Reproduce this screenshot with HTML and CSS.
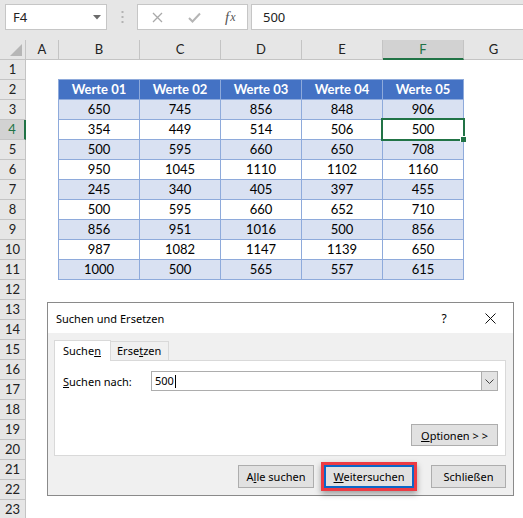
FILE: index.html
```html
<!DOCTYPE html>
<html lang="de">
<head>
<meta charset="utf-8">
<title>Suchen und Ersetzen</title>
<link rel="stylesheet" href="styles.css">
</head>
<body>
<div class="toolbar">
  <div class="namebox"><span>F4</span><svg class="nb-arrow" width="8" height="5" viewBox="0 0 8 5"><polygon points="0,0 8,0 4,4.5" fill="#6b6b6b"/></svg></div>
  <div class="grip"><svg width="3" height="12" viewBox="0 0 3 12"><rect x="0.5" y="0" width="2" height="2" fill="#b3b3b3"/><rect x="0.5" y="5" width="2" height="2" fill="#b3b3b3"/><rect x="0.5" y="10" width="2" height="2" fill="#b3b3b3"/></svg></div>
  <div class="fbtns">
    <span class="fb"><svg width="11" height="11" viewBox="0 0 11 11"><path d="M1 1 L10 10 M10 1 L1 10" stroke="#a9a9a9" stroke-width="1.3" fill="none"/></svg></span>
    <span class="fb"><svg width="13" height="11" viewBox="0 0 13 11"><path d="M1 6 L4.5 9.5 L12 1.5" stroke="#b5b5b5" stroke-width="2" fill="none"/></svg></span>
    <span class="fb fx"><i>f</i><i class="x">x</i></span>
  </div>
  <div class="formula">500</div>
</div>

<div class="colheads">
  <div class="corner"><svg width="12" height="12" viewBox="0 0 12 12"><polygon points="12,0 12,12 0,12" fill="#b6b6b6"/></svg></div>
  <div class="ch w-a">A</div>
  <div class="ch w-c">B</div>
  <div class="ch w-c">C</div>
  <div class="ch w-c">D</div>
  <div class="ch w-c">E</div>
  <div class="ch w-c sel">F</div>
  <div class="ch w-g">G</div>
</div>

<div class="sheet">
  <div class="rowheads">
    <div class="rh">1</div><div class="rh">2</div><div class="rh">3</div><div class="rh sel">4</div>
    <div class="rh">5</div><div class="rh">6</div><div class="rh">7</div><div class="rh">8</div>
    <div class="rh">9</div><div class="rh">10</div><div class="rh">11</div><div class="rh">12</div>
    <div class="rh">13</div><div class="rh">14</div><div class="rh">15</div><div class="rh">16</div>
    <div class="rh">17</div><div class="rh">18</div><div class="rh">19</div><div class="rh">20</div>
    <div class="rh">21</div><div class="rh">22</div><div class="rh">23</div>
  </div>
  <div class="cells">
    <div class="tbl">
      <div class="c th">Werte 01</div><div class="c th">Werte 02</div><div class="c th">Werte 03</div><div class="c th">Werte 04</div><div class="c th">Werte 05</div>
      <div class="c band">650</div><div class="c band">745</div><div class="c band">856</div><div class="c band">848</div><div class="c band">906</div>
      <div class="c">354</div><div class="c">449</div><div class="c">514</div><div class="c">506</div><div class="c">500</div>
      <div class="c band">500</div><div class="c band">595</div><div class="c band">660</div><div class="c band">650</div><div class="c band">708</div>
      <div class="c">950</div><div class="c">1045</div><div class="c">1110</div><div class="c">1102</div><div class="c">1160</div>
      <div class="c band">245</div><div class="c band">340</div><div class="c band">405</div><div class="c band">397</div><div class="c band">455</div>
      <div class="c">500</div><div class="c">595</div><div class="c">660</div><div class="c">652</div><div class="c">710</div>
      <div class="c band">856</div><div class="c band">951</div><div class="c band">1016</div><div class="c band">500</div><div class="c band">856</div>
      <div class="c">987</div><div class="c">1082</div><div class="c">1147</div><div class="c">1139</div><div class="c">650</div>
      <div class="c band">1000</div><div class="c band">500</div><div class="c band">565</div><div class="c band">557</div><div class="c band">615</div>
    </div>
  </div>
</div>

<div class="selection"><span class="handle"></span></div>

<div class="dialog">
  <div class="titlebar">
    <span class="title">Suchen und Ersetzen</span>
    <span class="help">?</span>
    <span class="close"><svg width="11" height="11" viewBox="0 0 11 11"><path d="M0.5 0.5 L10.5 10.5 M10.5 0.5 L0.5 10.5" stroke="#111" stroke-width="1" fill="none"/></svg></span>
  </div>
  <div class="dlg-body">
    <div class="tabs">
      <div class="tab active">Suche<u>n</u></div>
      <div class="tab">Erse<u>t</u>zen</div>
    </div>
    <div class="panel">
      <div class="findrow">
        <span class="label"><u>S</u>uchen nach:</span>
        <div class="combo">
          <span class="value">500<span class="caret"></span></span>
          <span class="dd"><svg width="9" height="5" viewBox="0 0 9 5"><path d="M0.5 0.5 L4.5 4.5 L8.5 0.5" stroke="#444" stroke-width="1" fill="none"/></svg></span>
        </div>
      </div>
      <div class="optrow"><button class="btn opt"><u>O</u>ptionen &gt; &gt;</button></div>
    </div>
    <div class="footer">
      <button class="btn all">A<u>l</u>le suchen</button>
      <div class="hl"><button class="btn next"><u>W</u>eitersuchen</button></div>
      <button class="btn closebtn">Schließen</button>
    </div>
  </div>
</div>
</body>
</html>
```

FILE: styles.css
```css
* { box-sizing: border-box; margin: 0; padding: 0; }
html, body { width: 523px; height: 518px; overflow: hidden; }
body {
  background: #e6e6e6;
  font-family: "Lato", "Liberation Sans", sans-serif;
  position: relative;
  color: #000;
}

/* formula bar */
.toolbar {
  height: 40px;
  display: flex;
  align-items: flex-start;
  padding: 4px 0 0 5px;
}
.namebox {
  width: 102px;
  height: 26px;
  background: #fff;
  border: 1px solid #c6c6c6;
  display: flex;
  align-items: center;
  justify-content: space-between;
  padding: 0 5px 0 7px;
  font: 13px "Noto Sans", sans-serif;
  color: #222;
}
.nb-arrow { margin-top: 1px; }
.grip {
  width: 30px;
  height: 26px;
  display: flex;
  align-items: center;
  justify-content: center;
}
.fbtns {
  width: 111px;
  height: 26px;
  background: #fff;
  border: 1px solid #c6c6c6;
  display: flex;
  align-items: center;
  padding-left: 14px;
}
.fb { display: flex; align-items: center; justify-content: center; }
.fb:nth-child(1) { width: 11px; }
.fb:nth-child(2) { width: 13px; margin-left: 25px; }
.fx {
  margin-left: 24px;
  font: italic 15px "Liberation Serif", serif;
  color: #555;
}
.fx .x { font-size: 12px; margin-left: 1px; }
.formula {
  flex: 1;
  height: 26px;
  margin: 0 -6px 0 3px;
  background: #fff;
  border: 1px solid #c6c6c6;
  font: 13px "Noto Sans", sans-serif;
  color: #222;
  padding-left: 11px;
  line-height: 24px;
}

/* column headers */
.colheads {
  height: 20px;
  display: flex;
  font-size: 13px;
  color: #222;
}
.corner {
  width: 26px;
  border-right: 1px solid #c4c4c4;
  border-bottom: 1px solid #c4c4c4;
  display: flex;
  align-items: flex-end;
  justify-content: flex-end;
  padding: 0 3px 3px 0;
}
.ch {
  border-right: 1px solid #c4c4c4;
  border-bottom: 1px solid #c4c4c4;
  text-align: center;
  line-height: 19px;
}
.w-a { width: 33px; }
.w-c { width: 81px; }
.w-g { flex: 1; border-right: none; }
.ch.sel {
  background: #d2d2d2;
  color: #217346;
  border-bottom: 2px solid #217346;
}

/* sheet */
.sheet { display: flex; }
.rowheads { width: 26px; flex: none; }
.rh {
  height: 20px;
  border-right: 1px solid #c4c4c4;
  border-bottom: 1px solid #c4c4c4;
  text-align: center;
  font-size: 13px;
  line-height: 19px;
  color: #222;
}
.rh.sel {
  background: #d2d2d2;
  color: #217346;
  border-right: 2px solid #217346;
}
.cells {
  flex: 1;
  background: #fff;
  height: 460px;
}
.tbl {
  display: grid;
  grid-template-columns: repeat(5, 81px);
  width: 406px;
  margin: 19px 0 0 32px;
  border-left: 1px solid #8eaadb;
  border-top: 1px solid #8eaadb;
}
.c {
  height: 20px;
  border-right: 1px solid #8eaadb;
  border-bottom: 1px solid #8eaadb;
  text-align: center;
  font-size: 13px;
  line-height: 19px;
  color: #000;
}
.c.th { background: #4472c4; color: #fff; font-weight: 700; }
.c.band { background: #d9e1f2; }

.selection {
  position: absolute;
  left: 381px;
  top: 118px;
  width: 84px;
  height: 23px;
  border: 2px solid #217346;
}
.handle {
  position: absolute;
  right: -3px;
  bottom: -3px;
  width: 6px;
  height: 6px;
  background: #217346;
  border-left: 1px solid #fff;
  border-top: 1px solid #fff;
}

/* dialog */
.dialog {
  position: absolute;
  left: 47px;
  top: 302px;
  width: 467px;
  height: 194px;
  border: 1px solid #8a8a8a;
  background: #f0f0f0;
  font: 11px "Noto Sans", sans-serif;
  color: #000;
  display: flex;
  flex-direction: column;
}
.titlebar {
  height: 30px;
  background: #fff;
  display: flex;
  align-items: center;
  padding-left: 8px;
  font-size: 11px;
}
.title { flex: 1; }
.help { width: 46px; text-align: center; font-size: 12px; }
.close { width: 46px; display: flex; justify-content: center; }
.dlg-body { padding: 7px 7px 0 6px; }
.tabs { display: flex; align-items: flex-end; height: 20px; }
.tab {
  height: 19px;
  width: 58px;
  border: 1px solid #d9d9d9;
  border-bottom: none;
  border-left: none;
  padding-left: 6px;
  line-height: 17px;
  position: relative;
}
.tab.active {
  height: 21px;
  width: 57px;
  background: #fff;
  border-left: 1px solid #d9d9d9;
  padding-left: 8px;
  line-height: 20px;
  margin-bottom: -1px;
  z-index: 1;
}
.panel {
  width: 452px;
  height: 96px;
  background: #fff;
  border: 1px solid #d9d9d9;
  padding: 10px 7px 0 8px;
}
.findrow { display: flex; align-items: center; height: 20px; }
.label { width: 88px; }
.combo {
  flex: 1;
  height: 20px;
  border: 1px solid #adadad;
  display: flex;
  align-items: stretch;
}
.value { flex: 1; padding-left: 3px; line-height: 18px; display: flex; align-items: center; }
.caret { display: inline-block; width: 1px; height: 13px; background: #000; margin-left: 1px; }
.dd {
  width: 16px;
  background: #e3e3e3;
  border-left: 1px solid #adadad;
  display: flex;
  align-items: center;
  justify-content: center;
}
.optrow { display: flex; justify-content: flex-end; margin-top: 33px; }
.btn {
  font: 11px "Noto Sans", sans-serif;
  color: #000;
  background: #e1e1e1;
  border: 1px solid #adadad;
  height: 23px;
  padding: 0;
}
.opt { width: 87px; height: 22px; }
.footer {
  display: flex;
  align-items: center;
  justify-content: flex-end;
  height: 29px;
  margin-top: 6px;
}
.all { width: 76px; margin-right: 7px; }
.hl {
  border: 3px solid #ec3b44;
  box-shadow: 0 3px 6px rgba(0, 0, 0, 0.35);
  display: flex;
}
.next { width: 90px; border: 2px solid #0a67c8; }
.closebtn { width: 75px; margin-left: 14px; }
```
